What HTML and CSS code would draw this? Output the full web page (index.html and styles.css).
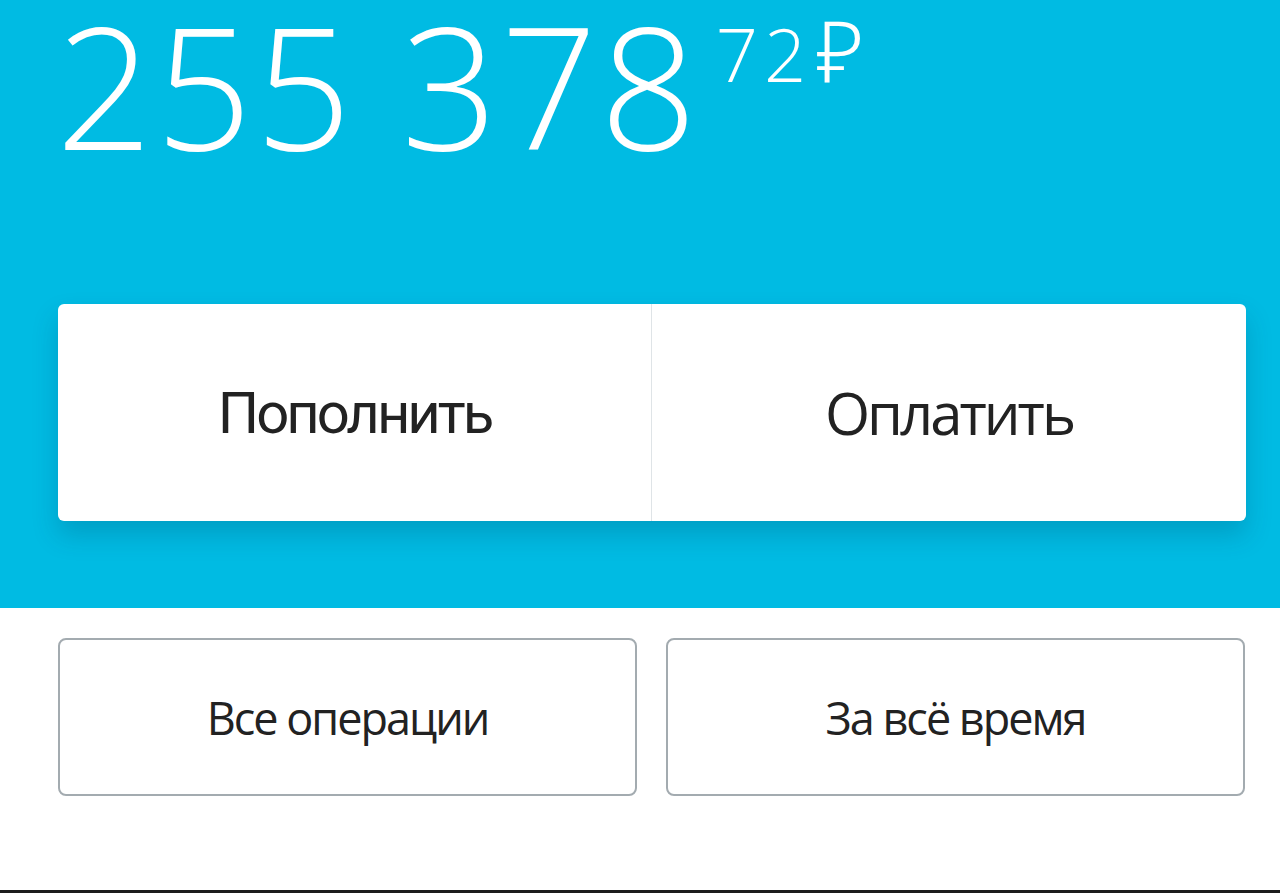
FILE: index.html
```html
<!doctype html>
<html lang="ru">
<head>
    <meta charset="utf-8" />
    <meta name="viewport" content="width=device-width, initial-scale=1" />
    <title>Баланс</title>
    <link rel="stylesheet" href="styles.css">
</head>
<body>
    <section class="Hero">
        <div class="Balance">
            <span class="Balance_main">255 378</span>
            <span class="Balance_sub">72<span class="Balance_cur">₽</span></span>
        </div>
        <div class="Actions">
            <button class="Actions_btn Actions_btn--first">Пополнить</button>
            <button class="Actions_btn">Оплатить</button>
        </div>
    </section>
    <div class="Filters">
        <button class="Filters_btn">Все операции</button>
        <button class="Filters_btn">За всё время</button>
    </div>
    <div class="Bottom"></div>
</body>
</html>
```

FILE: styles.css
```css
body {
    margin: 0;
    background: #fff;
    font-family: 'Open Sans', 'Noto Sans', sans-serif;
    color: #222;
}
button {
    font-family: inherit;
    border: 0;
    background: none;
    padding: 0;
    color: inherit;
}
.Hero {
    height: 608px;
    box-sizing: border-box;
    padding: 0 34px 0 58px;
    background: #00bbe3;
    overflow: hidden;
}
.Balance {
    display: flex;
    align-items: flex-start;
    height: 182px;
    margin-left: -2px;
    color: #fff;
    font-weight: 300;
    line-height: 1;
}
.Balance_main {
    font-size: 169px;
    letter-spacing: 3px;
}
.Balance_sub {
    margin: 8px 0 0 16px;
    font-size: 74px;
    letter-spacing: 6px;
}
.Balance_cur {
    margin-left: 4px;
    font-size: 84px;
    letter-spacing: 0;
}
.Actions {
    display: grid;
    grid-template-columns: 1fr 1fr;
    height: 217px;
    margin-top: 122px;
    background: #fff;
    border-radius: 6px;
    box-shadow: 0 14px 26px rgba(0, 60, 90, 0.22);
}
.Actions_btn {
    font-size: 58px;
    letter-spacing: -3px;
}
.Actions_btn--first {
    border-right: 1px solid #dfe4e7;
    font-family: Roboto, 'Open Sans', sans-serif;
}
.Filters {
    display: grid;
    grid-template-columns: 1fr 1fr;
    gap: 29px;
    padding: 30px 35px 0 58px;
}
.Filters_btn {
    height: 158px;
    box-sizing: border-box;
    border: 2px solid #a3abb0;
    border-radius: 8px;
    font-size: 45px;
    letter-spacing: -2px;
}
.Bottom {
    margin-top: 94px;
    height: 3px;
    background: #1c1c1c;
}
```
